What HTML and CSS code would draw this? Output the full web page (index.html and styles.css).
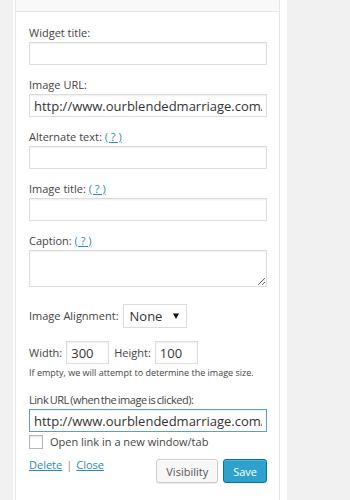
FILE: index.html
```html
<!DOCTYPE html>
<html lang="en">
<head>
    <meta charset="UTF-8">
    <title>Image Widget</title>
    <link rel="stylesheet" href="styles.css">
</head>
<body>
    <div class="sidebar">
        <div class="widget">
            <div class="widget-top"></div>
            <div class="widget-inside">
                <div class="field">
                    <label for="title">Widget title:</label>
                    <input type="text" id="title">
                </div>
                <div class="field">
                    <label for="image-url">Image URL:</label>
                    <input type="text" id="image-url" value="http://www.ourblendedmarriage.com/wp-content/uploads/2014/01/blended.jpg">
                </div>
                <div class="field">
                    <label for="alt">Alternate text: <a href="#" class="help">( ? )</a></label>
                    <input type="text" id="alt">
                </div>
                <div class="field">
                    <label for="img-title">Image title: <a href="#" class="help">( ? )</a></label>
                    <input type="text" id="img-title">
                </div>
                <div class="field">
                    <label for="caption">Caption: <a href="#" class="help">( ? )</a></label>
                    <textarea id="caption"></textarea>
                </div>

                <div class="align-row">
                    <span class="row-label">Image Alignment:</span>
                    <div class="select-box">
                        <span>None</span>
                        <svg width="6" height="6" viewBox="0 0 6 6"><path d="M0 0.5 H6 L3 6 Z" fill="#111"/></svg>
                    </div>
                </div>

                <div class="size-row">
                    <label for="width">Width:</label>
                    <input type="text" id="width" class="small-input" value="300">
                    <label for="height">Height:</label>
                    <input type="text" id="height" class="small-input" value="100">
                </div>
                <p class="hint">If empty, we will attempt to determine the image size.</p>

                <div class="field">
                    <label for="link" class="tight">Link URL (when the image is clicked):</label>
                    <input type="text" id="link" class="focused" value="http://www.ourblendedmarriage.com/category/blended-family">
                </div>
                <div class="check-row">
                    <input type="checkbox" id="new-window">
                    <label for="new-window">Open link in a new window/tab</label>
                </div>

                <div class="control-row">
                    <div class="links">
                        <a href="#">Delete</a><span class="sep">|</span><a href="#">Close</a>
                    </div>
                    <div class="buttons">
                        <button type="button" class="btn">Visibility</button>
                        <button type="button" class="btn btn-primary">Save</button>
                    </div>
                </div>
            </div>
        </div>
    </div>
</body>
</html>
```

FILE: styles.css
```css
body {
    margin: 0;
    background-color: #f1f1f1;
    font-family: 'Open Sans', sans-serif;
    font-size: 11px;
    color: #444;
    height: 500px;
    overflow: hidden;
}

.sidebar {
    margin-left: 13px;
    width: 274px;
    height: 500px;
    background-color: #fff;
}

.widget {
    margin-left: 2px;
    width: 263px;
    height: 500px;
    border-left: 1px solid #e5e5e5;
    border-right: 1px solid #e5e5e5;
    background-color: #fff;
}

.widget-top {
    height: 11px;
    background-color: #f9f9f9;
    border-bottom: 1px solid #e5e5e5;
}

.widget-inside {
    padding: 12px 12px 0 13px;
}

.field {
    margin-bottom: 11px;
}

label, .row-label {
    display: block;
    line-height: 18px;
}

.tight {
    letter-spacing: -0.45px;
    word-spacing: -1px;
}

.help {
    color: #2a8ab8;
}

input[type="text"], textarea {
    display: block;
    width: 238px;
    height: 23px;
    margin: 0;
    padding: 0 4px;
    border: 1px solid #ddd;
    box-shadow: inset 0 1px 2px rgba(0, 0, 0, 0.07);
    box-sizing: border-box;
    font-family: inherit;
    font-size: 13px;
    color: #333;
    background: #fff;
    outline: none;
}

textarea {
    height: 37px;
    resize: vertical;
}

.focused {
    border-color: #5b9dd9 !important;
    box-shadow: 0 0 2px rgba(30, 140, 190, 0.8);
}

.align-row {
    display: flex;
    align-items: center;
    gap: 4px;
    margin-top: 17px;
}

.select-box {
    display: flex;
    align-items: center;
    justify-content: space-between;
    width: 64px;
    height: 24px;
    padding: 0 7px 0 6px;
    border: 1px solid #ddd;
    box-sizing: border-box;
    font-size: 13px;
    color: #333;
}

.size-row {
    display: flex;
    align-items: center;
    margin-top: 13px;
}

.size-row label {
    display: inline;
}

.size-row .small-input {
    width: 43px;
    margin: 0 5px 0 4px;
    font-size: 13px;
}

.hint {
    margin: 2px 0 11px;
    font-size: 9px;
    line-height: 14px;
}

.check-row {
    display: flex;
    align-items: center;
    gap: 7px;
    margin-top: -10px;
}

input[type="checkbox"] {
    appearance: none;
    width: 14px;
    height: 14px;
    margin: 0;
    border: 1px solid #b4b9be;
    box-shadow: inset 0 1px 2px rgba(0, 0, 0, 0.1);
}

.check-row label {
    font-size: 11px;
}

.control-row {
    display: flex;
    justify-content: space-between;
    align-items: flex-start;
    margin-top: 5px;
}

.links {
    line-height: 18px;
}

.links a {
    color: #2a8ab8;
}

.sep {
    color: #888;
    margin: 0 4px;
}

.buttons {
    display: flex;
    gap: 5px;
    padding-top: 3px;
}

.btn {
    height: 24px;
    padding: 0 9px;
    border: 1px solid #ccc;
    border-radius: 3px;
    background-color: #f7f7f7;
    box-shadow: inset 0 1px 0 #fff, 0 1px 0 rgba(0, 0, 0, 0.08);
    font-family: inherit;
    font-size: 11px;
    color: #555;
}

.btn-primary {
    background-color: #2ea2cc;
    border-color: #0074a2;
    color: #fff;
    box-shadow: inset 0 1px 0 rgba(120, 200, 230, 0.5);
}
```
